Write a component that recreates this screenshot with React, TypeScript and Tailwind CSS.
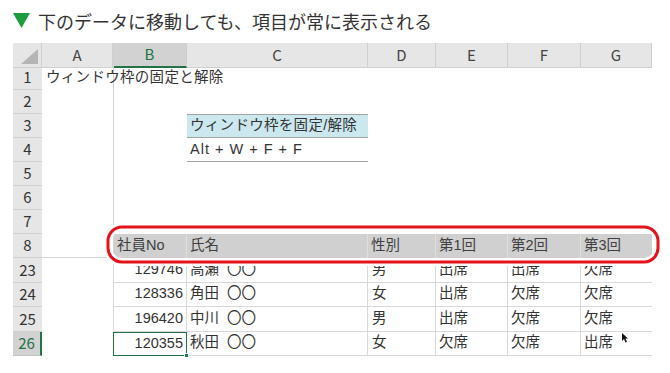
import type { ReactNode } from "react";

const cols = "grid grid-cols-[29px_71px_74px_181px_68px_72px_73px_71px]";
const font = { fontFamily: '"Noto Sans CJK JP", "Noto Sans", sans-serif' };
const cellFont = { fontFamily: '"Liberation Sans", "Noto Sans CJK JP", sans-serif' };

const letters = ["A", "B", "C", "D", "E", "F", "G"];

const data = [
  { row: 23, no: "129746", name: "高瀬 〇〇", sex: "男", a: "出席", b: "出席", c: "欠席" },
  { row: 24, no: "128336", name: "角田 〇〇", sex: "女", a: "出席", b: "欠席", c: "欠席" },
  { row: 25, no: "196420", name: "中川 〇〇", sex: "男", a: "出席", b: "欠席", c: "欠席" },
  { row: 26, no: "120355", name: "秋田 〇〇", sex: "女", a: "欠席", b: "欠席", c: "出席" },
];

function RowHead({ n, active }: { n: number; active?: boolean }) {
  return (
    <div
      className={
        active
          ? "flex items-center justify-center border-b border-r-2 border-b-[#c4c4c4] border-r-[#217346] bg-[#d2d2d2] text-[15px] text-[#217346]"
          : "flex items-center justify-center border-b border-[#d0d0d0] bg-[#e6e6e6] text-[15px] text-[#333]"
      }
      style={font}
    >
      {n}
    </div>
  );
}

function PlainRow({ n, a, b, c }: { n: number; a?: ReactNode; b?: ReactNode; c?: ReactNode }) {
  return (
    <div className={`${cols} h-[24px]`}>
      <RowHead n={n} />
      <div className="relative">{a}</div>
      <div className="border-l border-[#d4d4d4]">{b}</div>
      {c ?? <div />}
      <div />
      <div />
      <div />
      <div />
    </div>
  );
}

export default function App() {
  return (
    <div className="relative h-[373px] w-[670px] overflow-hidden bg-white text-[#333]" style={font}>
      <div className="flex h-[43px] items-center gap-[8px] pl-[13px] pb-[2px]">
        <svg width="17" height="15" viewBox="0 0 17 15">
          <polygon points="0,0 17,0 8.5,15" fill="#1f9b40" />
        </svg>
        <span className="text-[18px] leading-none text-[#333]">下のデータに移動しても、項目が常に表示される</span>
      </div>

      <div className="ml-[13px] w-[639px] text-[14.5px]" style={cellFont}>
        {/* column headers */}
        <div className={`${cols} h-[23px] text-[15px] text-[#444]`} style={font}>
          <div className="relative border-b border-r border-[#cfcfcf] bg-[#e6e6e6]">
            <svg className="absolute bottom-[3px] right-[3px]" width="17" height="15" viewBox="0 0 17 15">
              <polygon points="17,0 17,15 0,15" fill="#b5b5b5" />
            </svg>
          </div>
          {letters.map((l) =>
            l === "B" ? (
              <div key={l} className="flex items-center justify-center border-b-2 border-r border-b-[#217346] border-r-[#cfcfcf] bg-[#d2d2d2] text-[#217346]">
                {l}
              </div>
            ) : (
              <div key={l} className="flex items-center justify-center border-b border-r border-[#cfcfcf] bg-[#e6e6e6]">
                {l}
              </div>
            )
          )}
        </div>

        <PlainRow
          n={1}
          a={<span className="absolute left-[4px] top-0 z-10 flex h-full items-center whitespace-nowrap tracking-[0.3px]">ウィンドウ枠の固定と解除</span>}
        />
        <PlainRow n={2} />
        <PlainRow
          n={3}
          c={
            <div className="flex items-center border-y border-[#a3a3a3] bg-[#cbe8ee] pl-[3px] whitespace-nowrap tracking-[0.3px]">
              ウィンドウ枠を固定/解除
            </div>
          }
        />
        <PlainRow n={4} c={<div className="flex items-center border-b border-[#a3a3a3] pl-[3px] tracking-[1px]">Alt + W + F + F</div>} />
        <PlainRow n={5} />
        <PlainRow n={6} />
        <PlainRow n={7} />

        {/* table header, frozen row 8 */}
        <div className={`${cols} h-[24px]`}>
          <RowHead n={8} />
          <div className="border-b border-[#d4d4d4]" />
          {["社員No", "氏名", "性別", "第1回", "第2回", "第3回"].map((h, i) => (
            <div
              key={h}
              className={`flex items-center bg-[#d0d0d0] pl-[3px] text-[#404040] ${i === 0 ? "border-l border-l-[#d4d4d4]" : ""} ${i < 5 ? "border-r border-r-[#dedede]" : ""}`}
            >
              {h}
            </div>
          ))}
        </div>

        {data.map((d) => (
          <div key={d.row} className={`${cols} h-[24.5px]`}>
            <RowHead n={d.row} active={d.row === 26} />
            <div />
            <div
              className={
                d.row === 26
                  ? "relative flex items-center justify-end border border-[#217346] pr-[3px]"
                  : "flex items-center justify-end border-b border-l border-r border-[#d9d9d9] pr-[3px]"
              }
            >
              {d.no}
              {d.row === 26 && <span className="absolute -bottom-[3px] -right-[3px] h-[5px] w-[5px] border border-white bg-[#217346]" />}
            </div>
            <div className="flex items-center whitespace-pre border-b border-r border-[#d9d9d9] pl-[3px]">{d.name.replace(" ", "  ")}</div>
            <div className="flex items-center border-b border-r border-[#d9d9d9] pl-[4px]">{d.sex}</div>
            <div className="flex items-center border-b border-r border-[#d9d9d9] pl-[3px]">{d.a}</div>
            <div className="flex items-center border-b border-r border-[#d9d9d9] pl-[3px]">{d.b}</div>
            <div className="flex items-center border-b border-[#d9d9d9] pl-[3px]">{d.c}</div>
          </div>
        ))}
      </div>

      {/* red highlight around the frozen header row */}
      <svg className="absolute left-[102px] top-[221px]" width="562" height="47" viewBox="0 0 562 47">
        <rect x="6" y="6" width="550" height="35" rx="14" fill="none" stroke="#ffffff" strokeWidth="8" />
        <rect x="6" y="6" width="550" height="35" rx="14" fill="none" stroke="#e3121b" strokeWidth="3" />
      </svg>

      {/* mouse pointer */}
      <svg className="absolute left-[622px] top-[333px]" width="7" height="10" viewBox="0 0 7 10">
        <polygon points="0,0 0,8 2,6 3.5,9.5 5,9 3.5,5.5 6,5.5" fill="#111" />
      </svg>
    </div>
  );
}
